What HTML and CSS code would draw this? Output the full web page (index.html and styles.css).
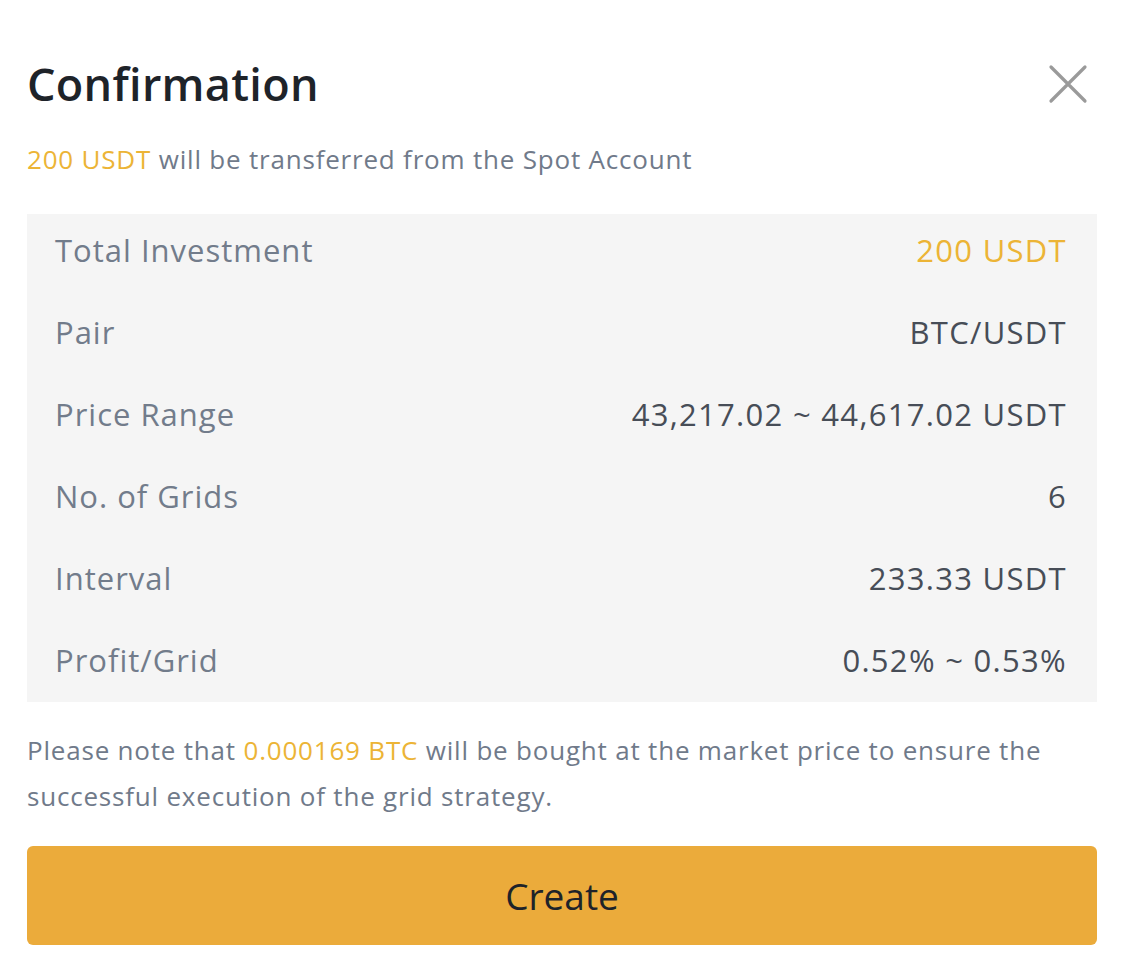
FILE: index.html
```html
<!DOCTYPE html>
<html lang="en">
<head>
<meta charset="utf-8">
<title>Confirmation</title>
<link rel="stylesheet" href="styles.css">
</head>
<body>
<div class="dialog">
  <div class="header">
    <h1 class="title">Confirmation</h1>
    <button class="close" aria-label="Close">
      <svg width="40" height="40" viewBox="0 0 40 40"><path d="M3 3L37 37M37 3L3 37" stroke="#9a9a9a" stroke-width="3.2" stroke-linecap="round" fill="none"/></svg>
    </button>
  </div>
  <p class="transfer"><span class="hl">200 USDT</span> will be transferred from the Spot Account</p>
  <div class="summary">
    <div class="row"><span class="label">Total Investment</span><span class="value hl">200 USDT</span></div>
    <div class="row"><span class="label">Pair</span><span class="value">BTC/USDT</span></div>
    <div class="row"><span class="label">Price Range</span><span class="value">43,217.02 ~ 44,617.02 USDT</span></div>
    <div class="row"><span class="label">No. of Grids</span><span class="value">6</span></div>
    <div class="row"><span class="label">Interval</span><span class="value">233.33 USDT</span></div>
    <div class="row"><span class="label">Profit/Grid</span><span class="value">0.52% ~ 0.53%</span></div>
  </div>
  <p class="note">Please note that <span class="hl">0.000169 BTC</span> will be bought at the market price to ensure the successful execution of the grid strategy.</p>
  <button class="create">Create</button>
</div>
</body>
</html>
```

FILE: styles.css
```css
html, body {
  margin: 0;
  padding: 0;
  background: #ffffff;
}
body {
  font-family: "Open Sans", "Noto Sans", "Liberation Sans", sans-serif;
  color: #474d57;
}
.dialog {
  width: 1070px;
  padding: 48px 0 0 27px;
}
.header {
  display: flex;
  align-items: center;
  justify-content: space-between;
  height: 72px;
}
.title {
  margin: 0;
  font-size: 45px;
  font-weight: 600;
  color: #1e2329;
  line-height: 72px;
  letter-spacing: 0.3px;
}
.close {
  background: none;
  border: 0;
  padding: 0;
  margin-right: 9px;
  width: 40px;
  height: 40px;
  display: flex;
}
.transfer {
  margin: 22px 0 0;
  font-size: 26px;
  line-height: 34px;
  letter-spacing: 0.8px;
  color: #707a8a;
}
.hl {
  color: #ecb436;
}
.summary {
  margin-top: 38px;
  background: #f5f5f5;
  padding: 16px 30px 22px 28px;
  display: flex;
  flex-direction: column;
  gap: 42px;
}
.row {
  display: flex;
  justify-content: space-between;
  align-items: center;
  height: 40px;
  font-size: 31px;
  letter-spacing: 1px;
  font-weight: 500;
}
.label {
  color: #727c8b;
}
.value {
  color: #474d57;
  letter-spacing: 1.3px;
}
.value.hl {
  color: #ecb436;
}
.note {
  margin: 25px 0 0;
  font-size: 26px;
  line-height: 46px;
  letter-spacing: 0.8px;
  color: #707a8a;
}
.create {
  display: block;
  margin-top: 27px;
  width: 100%;
  height: 99px;
  border: 0;
  border-radius: 6px;
  background: #ebab3b;
  color: #1e2329;
  font-family: inherit;
  font-size: 37px;
  font-weight: 500;
}
```
